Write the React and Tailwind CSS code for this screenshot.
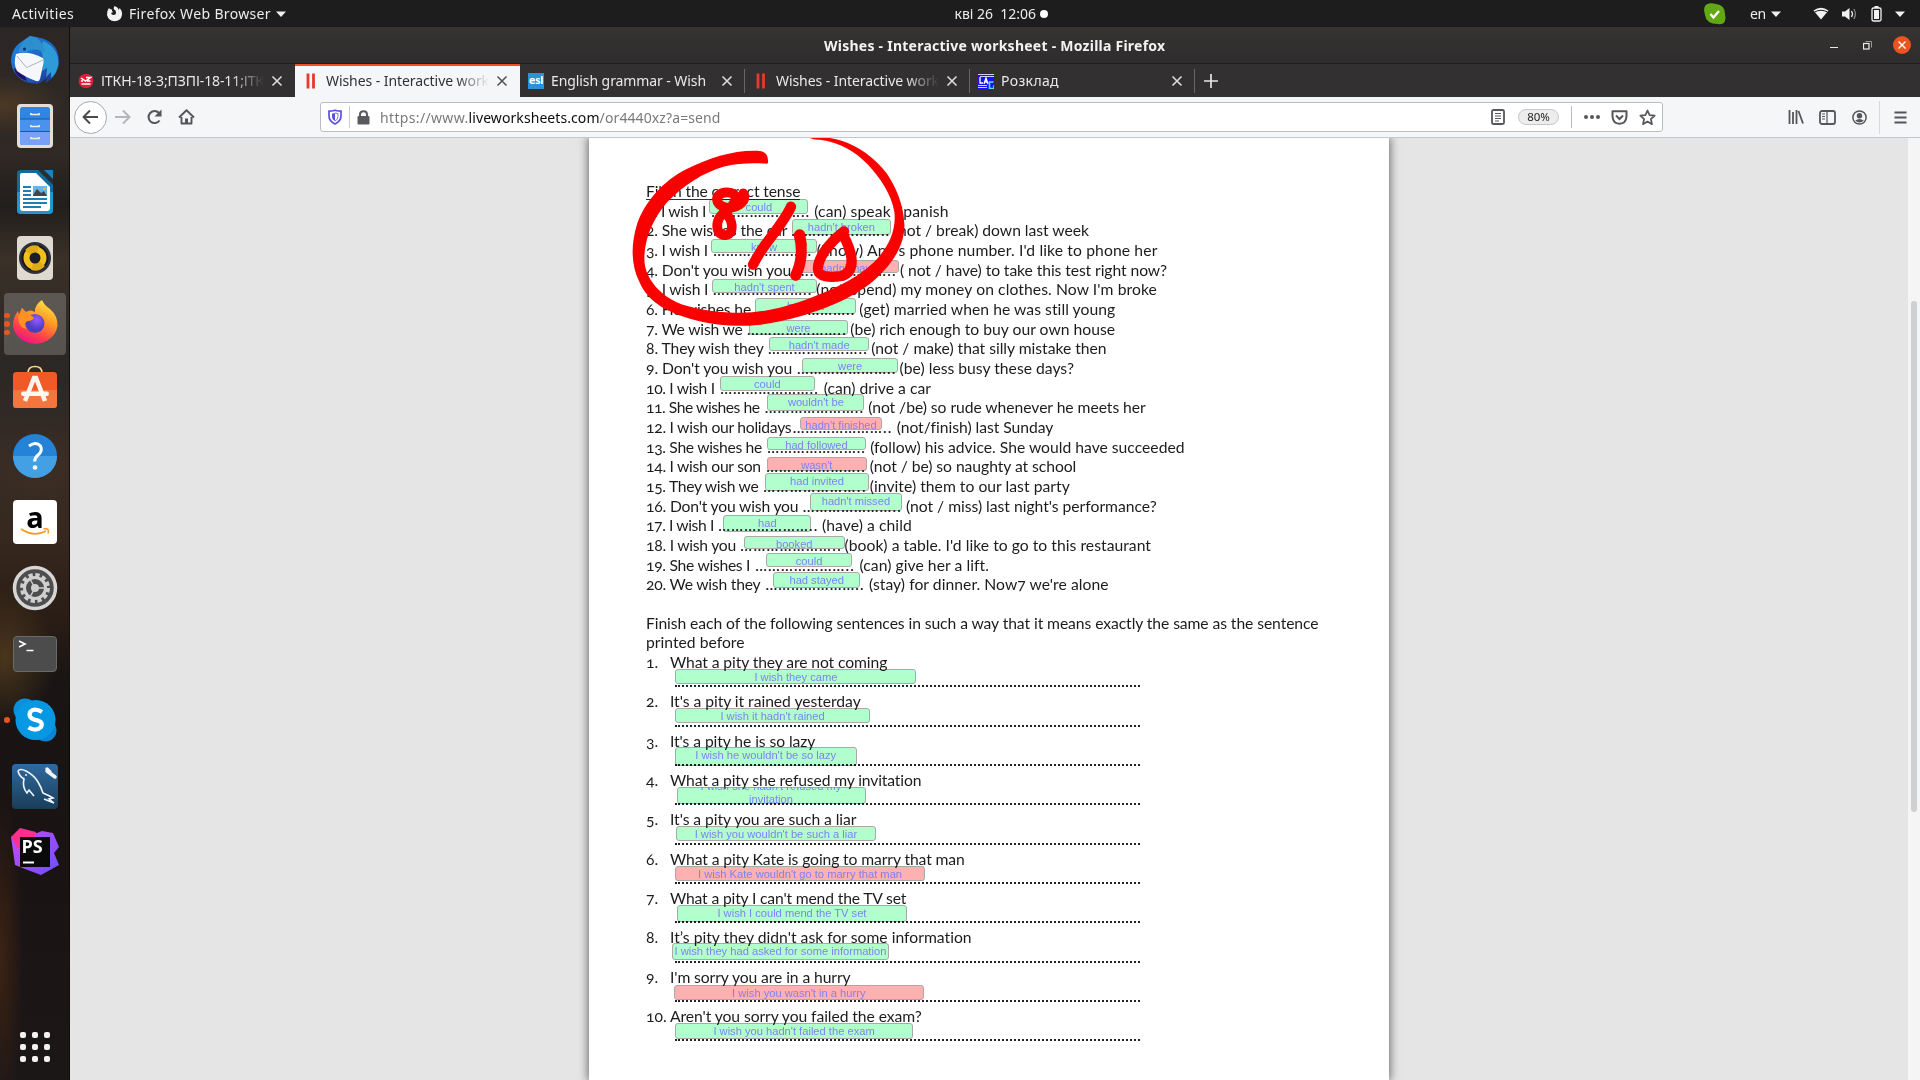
import { useLayoutEffect, useRef } from "react";

/* Text that is tracked so that it fills exactly w pixels. */
function Fit({ w, children, className = "" }) {
  const ref = useRef(null);
  useLayoutEffect(() => {
    const el = ref.current;
    el.style.letterSpacing = "0px";
    const n = el.textContent.length;
    const natural = el.getBoundingClientRect().width;
    el.style.letterSpacing = (w - natural) / n + "px";
  }, [w, children]);
  return (
    <span className={"block shrink-0 whitespace-pre " + className} style={{ width: w }}>
      <span ref={ref} className="inline-block whitespace-pre">{children}</span>
    </span>
  );
}

const LINES = [
  ["1. I wish I", 706, 711, 810, "(can) speak Spanish", 814.3, 948.5],
  ["2. She wishes the car", 787.3, 791, 890, "(not / break) down last week", 894, 1089],
  ["3. I wish I", 708, 713, 812, "(know) Ann's phone number. I'd like to phone her", 816.7, 1157.5],
  ["4. Don't you wish you", 791, 796.5, 896.5, "( not / have) to take this test right now?", 900, 1167],
  ["5. I wish I", 708.3, 712.7, 812.3, "(not/spend) my money on clothes. Now I'm broke", 816.3, 1157],
  ["6. He wishes he", 751, 755.7, 855.3, "(get) married when he was still young", 859.3, 1115.5],
  ["7. We wish we", 742.7, 746.7, 846.7, "(be) rich enough to buy our own house", 850.3, 1115],
  ["8. They wish they", 763.7, 767.8, 867.8, "(not / make) that silly mistake then", 871.3, 1106.5],
  ["9. Don't you wish you", 792.2, 796.7, 896.3, "(be) less busy these days?", 899.6, 1074],
  ["10. I wish I", 714.7, 720, 818.6, "(can) drive a car", 823.7, 931],
  ["11. She wishes he", 759.6, 764.5, 864, "(not /be) so rude whenever he meets her", 868.2, 1145.7],
  ["12. I wish our holidays", 791.4, 792.4, 892.2, "(not/finish) last Sunday", 896.7, 1053],
  ["13. She wishes he", 762, 767, 865.7, "(follow) his advice. She would have succeeded", 870.2, 1184.5],
  ["14. I wish our son", 760.8, 766, 865.7, "(not / be) so naughty at school", 869.8, 1076.3],
  ["15. They wish we", 758.4, 762.9, 867, "(invite) them to our last party", 869.8, 1069.8],
  ["16. Don't you wish you", 798.4, 802.4, 901.6, "(not / miss) last night's performance?", 906, 1156.7],
  ["17. I wish I", 713.9, 718, 818.4, "(have) a child", 822, 911.8],
  ["18. I wish you", 736, 740, 842, "(book) a table. I'd like to go to this restaurant", 844.5, 1151],
  ["19. She wishes I", 750.2, 755, 854.7, "(can) give her a lift.", 859.6, 988.6],
  ["20. We wish they", 760.4, 765.3, 864.5, "(stay) for dinner. Now7 we're alone", 869, 1108.6],
];

const QUESTIONS = [
  ["1.", "What a pity they are not coming", 887.2],
  ["2.", "It's a pity it rained yesterday", 860.7],
  ["3.", "It's a pity he is so lazy", 815.3],
  ["4.", "What a pity she refused my invitation", 921.6],
  ["5.", "It's a pity you are such a liar", 856.4],
  ["6.", "What a pity Kate is going to marry that man", 964.7],
  ["7.", "What a pity I can't mend the TV set", 906.2],
  ["8.", "It’s pity they didn't ask for some information", 971.9],
  ["9.", "I'm sorry you are in a hurry", 850.5],
  ["10.", "Aren't you sorry you failed the exam?", 921.6],
];

const G = true;
const R = false;
/* left, top, right, bottom, text, correct */
const ANSWERS = [
  [709.3, 198.5, 808.5, 213.7, "could", G],
  [792, 219.3, 890.7, 234.7, "hadn't broken", G],
  [711.3, 238.6, 816.7, 252.7, "know", G],
  [798.7, 260.3, 898.7, 272.7, "hadn't have", R],
  [712.3, 279.2, 816.7, 292.7, "hadn't spent", G],
  [755.3, 298.3, 855.7, 313.7, "had got", G],
  [749.3, 320.3, 847.7, 334.7, "were", G],
  [769, 337.3, 869.4, 350.7, "hadn't made", G],
  [802, 358.3, 898.4, 373.3, "were", G],
  [720, 376.3, 814.7, 391, "could", G],
  [767.3, 394.3, 864.5, 410.7, "wouldn't be", G],
  [800, 417.3, 882, 430.3, "hadn't finished", R],
  [767.3, 436.7, 865.7, 450, "had followed", G],
  [767, 456.5, 866.5, 470.7, "wasn't", R],
  [765.3, 473.4, 868.6, 490.7, "had invited", G],
  [810.2, 493.3, 901.6, 510.7, "hadn't missed", G],
  [723.3, 515.3, 811.4, 531.7, "had", G],
  [744, 536.3, 844.5, 549, "booked", G],
  [766, 553.3, 852.2, 567.3, "could", G],
  [773, 572.3, 860.4, 587.7, "had stayed", G],
  [675.3, 669.3, 916.5, 684.5, "I wish they came", G],
  [675.3, 708.3, 869.8, 722.7, "I wish it hadn't rained", G],
  [674.5, 747.3, 856.8, 765.7, "I wish he wouldn't be so lazy", G],
  [676.5, 786.7, 865.5, 804.5, "I wish she hadn't refused my invitation", G],
  [676, 826.3, 875.8, 840.7, "I wish you wouldn't be such a liar", G],
  [675.3, 866.4, 924.8, 880.7, "I wish Kate wouldn't go to marry that man", R],
  [677.3, 905.3, 906.6, 922, "I wish I could mend the TV set", G],
  [672, 943.4, 888.9, 960.4, "I wish they had asked for some information", G],
  [674, 985.4, 923.6, 1000, "I wish you wasn't in a hurry", R],
  [675.3, 1023.4, 912.8, 1038.7, "I wish you hadn't failed the exam", G],
];

function Answer({ a }) {
  const [l, t, r, b, text, ok] = a;
  const two = text.startsWith("I wish she");
  return (
    <div className="absolute" style={{ left: l - 589, top: t - 138, width: r - l, height: b - t }}>
      <div
        className={
          "absolute inset-0 rounded-[3px] border border-[#a9a9a9] mix-blend-multiply " +
          (ok ? "bg-[#b0ffcc]" : "bg-[#ffb0b0]")
        }
      />
      <div className="absolute inset-0 overflow-hidden text-center font-['Liberation_Sans',Arial,sans-serif] text-[11.15px] text-[#8080f4]">
        {two ? (
          <div className="-mt-[6.5px] leading-[12.8px]">
            I wish she hadn't refused my
            <br />
            invitation
          </div>
        ) : (
          <div className="whitespace-nowrap leading-[16px]">{text}</div>
        )}
      </div>
    </div>
  );
}

function Worksheet() {
  return (
    <div className="relative h-full w-[800px] bg-white pl-[57px] pt-[44px] text-[#1c1c1c] shadow-[0_0_9px_1px_rgba(0,0,0,0.55)] font-['Lato','Open_Sans',sans-serif] text-[15.7px] leading-[19.68px] oldstyle-nums">
      <div className="flex h-[19.68px]">
        <Fit w={154.3} className="h-[18px] border-b border-[#333]">Fill in the correct tense</Fit>
      </div>
      {LINES.map(([pre, pe, ds, de, post, ps, pend]) => (
        <div key={pre} className="flex h-[19.68px]">
          <Fit w={pe - 646}>{pre}</Fit>
          <div className="shrink-0" style={{ width: ds - pe }} />
          <Fit w={de - ds} className="font-['Open_Sans',sans-serif] text-[15px] font-semibold">…………………..</Fit>
          <div className="shrink-0" style={{ width: ps - de }} />
          <Fit w={pend - ps}>{post}</Fit>
        </div>
      ))}
      <div className="mt-[18.7px] h-[19.68px]">
        <Fit w={672.5}>Finish each of the following sentences in such a way that it means exactly the same as the sentence</Fit>
      </div>
      <div className="h-[19.68px]">
        <Fit w={98.5}>printed before</Fit>
      </div>
      {QUESTIONS.map(([n, q, end]) => (
        <div key={n} className="h-[39.34px]">
          <div className="flex h-[19.68px]">
            <div className="w-[24px] shrink-0 whitespace-nowrap">{n}</div>
            <Fit w={end - 670}>{q}</Fit>
          </div>
          <div className="ml-[29px] mt-[12.6px] w-[465px] border-t-2 border-dotted border-[#222]" />
        </div>
      ))}
      {ANSWERS.map((a, i) => (
        <Answer key={i} a={a} />
      ))}
      <svg className="absolute -left-[9px] -top-[8px] h-[220px] w-[400px]" viewBox="0 0 1200 660">
        <g fill="#fa0000">
          <path d="M564 99 Q567 66 540 63 C470 58 390 82 320 117 C250 152 195 215 172 280 C150 350 155 410 178 455 C205 520 270 548 330 566 C390 584 450 589 510 587 C570 583 600 574 650 562 C740 536 830 500 890 444 C950 390 976 330 973 280 C970 225 950 175 920 130 C885 85 840 50 780 31 Q765 26 750 24 L690 24 Q700 30 720 29 C780 36 830 68 862 102 C900 142 935 195 943 245 C950 300 925 355 880 398 C820 455 730 490 660 515 C590 538 530 551 460 548 C400 547 330 535 290 517 C230 488 198 440 194 400 C188 340 215 270 260 218 C310 165 370 128 430 110 C480 97 530 100 560 101 Z" />
        </g>
        <g fill="none" stroke="#fa0000" strokeLinecap="round" strokeLinejoin="round">
          <path strokeWidth="29" d="M490 190 C502 212 476 232 450 233 C418 234 404 212 414 198 C426 184 458 182 466 200 C470 222 446 240 430 250 C410 266 408 290 416 306 C428 320 448 318 454 302 C460 278 446 256 432 244" />
          <path strokeWidth="34" d="M462 222 L490 200" />
          <path strokeWidth="31" d="M633 230 C620 260 590 300 555 345 Q530 382 519 404" />
          <path strokeWidth="33" d="M658 316 Q674 380 647 436 M659 314 L664 345" />
          <path strokeWidth="31" d="M792 304 C750 336 712 384 714 418 C716 442 750 443 785 438 C828 424 820 372 790 316" />
        </g>
      </svg>
    </div>
  );
}

function Slot({ children, active, dots = 0 }) {
  return (
    <div className="flex h-[66px] w-[70px] shrink-0 items-center justify-center">
      <div className={"relative flex h-[62px] w-[62px] items-center justify-center rounded " + (active ? "bg-white/20" : "")}>
        {dots > 0 && (
          <div className="absolute left-0 flex h-full flex-col items-center justify-center gap-[3px]">
            {Array.from({ length: dots }, (_, i) => (
              <i key={i} className="block h-[5.5px] w-[5.5px] rounded-full bg-[#e95420]" />
            ))}
          </div>
        )}
        <svg width="50" height="50" viewBox="0 0 50 50">{children}</svg>
      </div>
    </div>
  );
}

function Dock() {
  return (
    <div className="flex w-[70px] shrink-0 flex-col border-r border-black/60 bg-[radial-gradient(ellipse_60px_30px_at_5px_78px,#4b3926,transparent),radial-gradient(ellipse_60px_40px_at_40px_440px,#3d2e24,transparent),radial-gradient(ellipse_50px_70px_at_5px_630px,#4a361c,transparent),radial-gradient(ellipse_24px_160px_at_0px_930px,#3c2314,transparent),linear-gradient(#2b2725,#302924_12%,#221e1c_17%,#3a3128_22%,#2b2724_32%,#362b25_40%,#37291f_48%,#2a1d16_56%,#191514_62%,#1a1313_80%,#1c1717)]">
      <Slot>
        <defs>
          <linearGradient id="tb" x1="0" y1="0" x2="1" y2="1"><stop offset="0" stopColor="#1f86dd" /><stop offset=".6" stopColor="#1f5fc0" /><stop offset="1" stopColor="#1a2a80" /></linearGradient>
        </defs>
        <path d="M20 1C26 2 34 3 40 7C48 13 50 22 48.500 31C46 41 40 46 35 48L37 43L30 48Q22 50 12 45Q2 38 1 27Q1 12 14 5Z" fill="url(#tb)" />
        <path d="M33 6C43 10 49 18 48.500 29C47 37 44 41 41 43L41 37L36 42L37 33L32 36Q35 24 31 16Z" fill="#2d9bd6" />
        <path d="M4 33Q5 42 17 46L14 39Z" fill="#24106b" />
        <path d="M6 19Q18 15 33 23Q34 25 33.500 28L30 44Q29 47 26 46Q15 42 7 36Q3 28 6 19Z" fill="#f5f7fb" />
        <path d="M7 21L16 32Q17 33 19 31.500L33 25" stroke="#aeb5be" fill="none" />
        <path d="M8 17Q11 6 20 1L26 2.500Q34 8 35 18Q24 11 15 18Z" fill="#2e8fce" />
        <circle cx="14.500" cy="14" r="1.500" fill="#152b66" />
      </Slot>
      <Slot>
        <rect x="7" y="3" width="36" height="44" rx="4" fill="#e4ded5" />
        <rect x="10" y="6" width="30" height="38" rx="2.5" fill="#2f86e2" />
        <rect x="10" y="18" width="30" height="12" fill="#4a92ee" />
        <path d="M10 31H40V41.500Q40 44 37.500 44H12.500Q10 44 10 41.500Z" fill="#78a0f6" />
        <path d="M10 18H40M10 30.500H40" stroke="#1d559f" />
        <path d="M21 12V13.500H29V12M21 24V25.500H29V24M21 36V37.500H29V36" stroke="#f1eee6" strokeWidth="1.700" fill="none" />
      </Slot>
      <Slot>
        <path d="M11 3H43V43Q43 47 39 47H11Q7 47 7 43V7Q7 3 11 3Z" fill="#146a9b" />
        <path d="M7 25H43V43Q43 47 39 47H11Q7 47 7 43Z" fill="#2494cc" />
        <path d="M12 6H26L40 20V41Q40 44 37 44H13Q10 44 10 41V8Q10 6 12 6Z" fill="#fff" />
        <path d="M28 3L43 18V3Z" fill="#23303a" />
        <path d="M34 3H43V12Z" fill="#1a84ba" />
        <path d="M13 20H21M13 24H21M13 28H21M13 32H37M13 36H37M13 40H31" stroke="#1d7fb5" strokeWidth="2" />
        <rect x="23" y="19" width="14" height="10" fill="#66b5e5" />
        <path d="M23 28L27 22L31 26L34 24L37 29H23Z" fill="#445" />
        <circle cx="34.500" cy="21.500" r="1.500" fill="#f8b62d" />
      </Slot>
      <Slot>
        <rect x="7" y="3" width="36" height="44" rx="4" fill="#dfdad0" />
        <circle cx="25" cy="25" r="16" fill="#2f323d" />
        <circle cx="25" cy="25" r="12.500" fill="#f2bf20" stroke="#171922" strokeWidth="2" />
        <path d="M25 25L15 17A13 13 0 0 1 29 13Z M25 25L35 33A13 13 0 0 1 21 37Z" fill="#e0ab18" />
        <circle cx="25" cy="25" r="5.500" fill="#1d1f26" />
      </Slot>
      <Slot active dots={3}>
        <defs>
          <linearGradient id="ff" x1=".8" y1="0" x2=".3" y2="1"><stop offset="0" stopColor="#ffe94a" /><stop offset=".4" stopColor="#ff9a22" /><stop offset=".75" stopColor="#ff3d4c" /><stop offset="1" stopColor="#e8128a" /></linearGradient>
          <radialGradient id="fp" cx=".6" cy=".3"><stop offset="0" stopColor="#9a59ff" /><stop offset="1" stopColor="#4a3fc4" /></radialGradient>
        </defs>
        <path d="M32 1Q34 6 40 10Q48 17 47.500 27A22.500 21 0 0 1 3 27Q3 18 8 12L9 16Q11 11 12 9L16 13Q20 10 25 13L25 10Q27 4 32 1Z" fill="url(#ff)" />
        <circle cx="25" cy="24.500" r="9.500" fill="url(#fp)" />
        <path d="M8 18L12 9L16 15Q21 15 24 19Q22 22 18 22Q12 24 17 30Q9 30 8 18Z" fill="#ff8f27" />
      </Slot>
      <Slot>
        <path d="M18 9V8Q18 1.500 25 1.500T32 8V9" stroke="#f0d49c" strokeWidth="1.700" fill="none" />
        <rect x="3" y="7" width="44" height="36" rx="3.500" fill="#ef5a26" />
        <path d="M3 25H47V39.500Q47 43 43.500 43H6.500Q3 43 3 39.500Z" fill="#f3763f" />
        <path d="M15 36L24 13H26L35 36" stroke="#fff4ed" strokeWidth="4.500" fill="none" />
        <rect x="11" y="26.500" width="28" height="4.500" rx="2.200" fill="#fff7f1" />
      </Slot>
      <Slot>
        <circle cx="25" cy="25" r="22" fill="#2482d7" />
        <path d="M3 25H47A22 22 0 0 1 3 25Z" fill="#44a0e4" />
        <path d="M19 15Q26 10 30.500 15Q33 20 28 24Q24.500 27 24.800 30.500" stroke="#fff" strokeWidth="3" fill="none" />
        <circle cx="25" cy="36.500" r="2.300" fill="#fff" />
      </Slot>
      <Slot>
        <rect x="3" y="3" width="44" height="44" rx="4" fill="#fff" />
        <text x="25" y="31" textAnchor="middle" fontSize="29" fontWeight="700" fontFamily="Open Sans, sans-serif" fill="#000">a</text>
        <path d="M11 32Q24 40.500 36 34" stroke="#f39c1f" strokeWidth="1.800" fill="none" />
        <path d="M33.500 32Q40 30.500 38 36.500" stroke="#f39c1f" strokeWidth="1.500" fill="none" />
      </Slot>
      <Slot>
        <circle cx="25" cy="25" r="20.500" fill="#4d4d4d" stroke="#d6d6d6" strokeWidth="3.500" />
        <circle cx="25" cy="25" r="13" fill="none" stroke="#cfcfcf" strokeWidth="4" strokeDasharray="4.200 2.600" />
        <circle cx="25" cy="25" r="10.500" fill="none" stroke="#cfcfcf" strokeWidth="3" />
        <circle cx="25" cy="25" r="4" fill="#cfcfcf" />
        <path d="M25 25L35 25M25 25L20 34M25 25L20 16" stroke="#cfcfcf" strokeWidth="1.500" />
      </Slot>
      <Slot>
        <rect x="3.500" y="7.500" width="43" height="35" rx="3.500" fill="#4c4c4c" stroke="#6a6a6a" />
        <path d="M9 12L15 15L9 18" stroke="#fff" strokeWidth="1.700" fill="none" />
        <path d="M16.500 21.500H23.500" stroke="#fff" strokeWidth="1.500" />
      </Slot>
      <Slot dots={1}>
        <circle cx="15" cy="15" r="11.500" fill="#0b8fdc" />
        <circle cx="35.500" cy="35.500" r="11" fill="#0a84d6" />
        <circle cx="25.500" cy="25" r="20" fill="#0798e4" />
        <path d="M32 17Q25 12.500 20.500 16.500Q17.500 23 25 24.800Q34 26.500 31 32Q26 37 18.500 32.500" stroke="#fff" strokeWidth="4.300" fill="none" />
      </Slot>
      <Slot>
        <defs><linearGradient id="my" x1="0" y1="0" x2="0" y2="1"><stop offset="0" stopColor="#2f6aa0" /><stop offset="1" stopColor="#1a3d58" /></linearGradient></defs>
        <rect x="2" y="3" width="46" height="45" rx="4" fill="url(#my)" />
        <path d="M8 10Q10 7 16 10Q24 14 28 21Q31 26 33 32Q38 34 43 37L39 38L44 42L34 38M8 10Q9 15 14 18Q12 26 17 32L19 29L24 35" stroke="#eef4fa" strokeWidth="1.600" fill="none" />
        <path d="M37 8L40 11M37 10L45 16" stroke="#eef4fa" strokeWidth="3.500" strokeLinecap="round" />
        <circle cx="16" cy="14" r=".9" fill="#fff" />
      </Slot>
      <Slot>
        <defs><linearGradient id="ps" x1="0" y1="0" x2="1" y2="1"><stop offset="0" stopColor="#c54bf0" /><stop offset="1" stopColor="#6c50ff" /></linearGradient></defs>
        <path d="M1 10L27 6L32 4L43 6L49 20L44 26L49 38L31 48L15 42L5 38Z" fill="url(#ps)" />
        <path d="M1 10L10 1L26 5L24 13L8 22Z" fill="#ff2f8e" />
        <rect x="10" y="10" width="30" height="30" fill="#0a0a0a" />
        <text x="11.500" y="26" fontSize="18" fontWeight="700" fontFamily="Open Sans, sans-serif" fill="#fff">PS</text>
        <path d="M13 35.500H24" stroke="#fff" strokeWidth="2" />
      </Slot>
      <div className="mx-auto mb-[18px] mt-auto grid grid-cols-3 gap-[6px]">
        {Array.from({ length: 9 }, (_, i) => (
          <i key={i} className="block h-[6px] w-[6px] rounded-[2px] bg-[#f2f2f0]" />
        ))}
      </div>
    </div>
  );
}

function Cross({ className = "text-[#dcdcdc]" }) {
  return (
    <svg width="12" height="12" viewBox="0 0 12 12" className={className}>
      <path d="M1.500 1.500L10.500 10.500M10.500 1.500L1.500 10.500" stroke="currentColor" strokeWidth="1.600" />
    </svg>
  );
}

const Bars = () => (
  <svg width="16" height="16" viewBox="0 0 16 16"><path d="M5 .5V15.500M10.500 .5V15.500" stroke="#e63a2e" strokeWidth="2.800" /></svg>
);

function Tab({ icon, text, w, active, fade, sep, pad, shift }) {
  return (
    <div className={"flex h-[33px] w-[225px] shrink-0 items-center " + (active ? "border-t-2 border-[#e95420] bg-[#f5f6f8] pb-[2px] text-[#303038]" : "text-[#e9e9e9]")}>
      <div className={"flex shrink-0 items-center gap-[7px] " + pad}>
        {icon}
        <div className={fade ? "[mask-image:linear-gradient(90deg,#000_80%,transparent)]" : ""}>
          <Fit w={w}>{text}</Fit>
        </div>
      </div>
      <div className={"ml-auto flex items-center " + (shift ? "mr-[12px]" : "mr-[11px]")}><Cross className={active ? "text-[#555]" : "text-[#dcdcdc]"} /></div>
      {sep && <div className="h-[24px] w-px bg-[#68666a]" />}
    </div>
  );
}

function Caret() {
  return <svg width="10" height="6" viewBox="0 0 10 6"><path d="M0 0.500H10L5 6Z" fill="#f0f0f0" /></svg>;
}

function At({ x, w = 20, children, className = "" }) {
  return (
    <div className={"absolute top-0 flex h-full items-center justify-center " + className} style={{ left: x - w / 2, width: w }}>
      {children}
    </div>
  );
}

function TopBar() {
  return (
    <div className="relative flex h-[27px] shrink-0 items-center bg-[#1d1d1d] pl-[12px] text-[14px] text-[#ececec]">
      <Fit w={62}>Activities</Fit>
      <svg className="ml-[32px]" width="17" height="17" viewBox="0 0 17 17">
        <path d="M8.500 1Q7 3 8 4.500Q10 5 10 7.500Q10 10 7.500 10Q5.500 10 5 8Q6 8 7 7Q5.500 6 6 4.500Q4 4.500 3 3Q0.500 6 1 10Q2.500 16 8.500 16.200Q15 16 16 10Q16.500 6 13.500 3L13 5Q12 2 8.500 1Z" fill="#f2f2f2" />
      </svg>
      <Fit w={142} className="ml-[6px]">Firefox Web Browser</Fit>
      <div className="ml-[5px]"><Caret /></div>
      <Fit w={81.5} className="absolute left-[954.5px]">кві 26  12:06</Fit>
      <div className="absolute left-[1040px] h-[8px] w-[8px] rounded-full bg-white" />
      <At x={1715} w={24}>
        <svg width="24" height="24" viewBox="0 0 24 24">
          <path d="M1 8Q1 2 7 1.200Q10 1 13 2Q22 3 22 12Q23 16 22 19Q20 23 15 22Q3 22 2 13Z" fill="#62a815" />
          <path d="M7.500 12L10.500 15.500L16 9" stroke="#fff" strokeWidth="2.400" fill="none" />
        </svg>
      </At>
      <Fit w={16} className="absolute left-[1750px]">en</Fit>
      <At x={1776}><Caret /></At>
      <At x={1821}><svg width="16" height="13" viewBox="0 0 16 13"><path d="M.5 3.500Q8-2 15.500 3.500L8 12.500Z" fill="#f2f2f2" /><path d="M1.500 5Q8 1.500 14.500 5" stroke="#1d1d1d" strokeWidth="1" fill="none" /></svg></At>
      <At x={1849}><svg width="15" height="14" viewBox="0 0 15 14"><path d="M0 4.500H3L7.500 1V13L3 9.500H0Z" fill="#f2f2f2" /><path d="M9.500 4Q11.500 7 9.500 10" stroke="#eee" strokeWidth="1.300" fill="none" /><path d="M11.800 2Q15 7 11.800 12" stroke="#888" strokeWidth="1.300" fill="none" /></svg></At>
      <At x={1876.5}><svg width="11" height="16" viewBox="0 0 11 16"><path d="M3.500 0H7.500V2H3.500Z" fill="#f2f2f2" /><rect x="1" y="2" width="9" height="13" rx="1.500" fill="none" stroke="#f2f2f2" strokeWidth="1.300" /><rect x="3" y="4" width="5" height="9" fill="#f2f2f2" /></svg></At>
      <At x={1900}><Caret /></At>
    </div>
  );
}

function Chrome() {
  return (
    <>
      <div className="relative flex h-[37px] shrink-0 items-center border-b border-[#1e1c1d] bg-gradient-to-b from-[#353431] to-[#2e2c2e] text-[14px] font-bold text-[#f3f3f3]">
        <Fit w={341.4} className="ml-[754px]">Wishes - Interactive worksheet - Mozilla Firefox</Fit>
        <At x={1764}><div className="mt-[4px] h-px w-[8px] bg-[#e8e8e8]" /></At>
        <At x={1797}><svg width="9" height="9" viewBox="0 0 9 9"><rect x=".5" y="2.500" width="5.500" height="5.500" fill="none" stroke="#eee" strokeWidth="1.200" /><path d="M2.500 .5H8.500V6.500" stroke="#999" fill="none" /></svg></At>
        <At x={1832}><div className="flex h-[18px] w-[18px] items-center justify-center rounded-full bg-[#e95420]"><svg width="8" height="8" viewBox="0 0 8 8"><path d="M.5 .5L7.500 7.500M7.500 .5L.5 7.500" stroke="#fff" strokeWidth="1.400" /></svg></div></At>
      </div>
      <div className="flex h-[33px] shrink-0 items-center bg-[#323031] text-[14px]">
        <Tab
          pad="ml-[8px]"
          shift
          icon={<svg width="16" height="16" viewBox="0 0 16 16"><circle cx="8" cy="8" r="7.300" fill="#e21d39" /><path d="M3 5L7.500 8L12.500 4.500H8M3 8H5M12.500 8H9M3.500 11H12.500" stroke="#fff" strokeWidth="1.500" fill="none" /></svg>}
          text="ІТКН-18-3;ПЗПІ-18-11;ІТК"
          w={163}
          fade
        />
        <Tab pad="ml-[8px]" shift active icon={<Bars />} text="Wishes - Interactive work" w={163} fade />
        <Tab pad="ml-[8px]" sep icon={<div className="flex h-[16px] w-[16px] items-center justify-center bg-[#2a93d8] text-[11px] font-bold tracking-[-0.5px] text-white">esl</div>} text="English grammar - Wish" w={155} />
        <Tab pad="ml-[8px]" sep icon={<Bars />} text="Wishes - Interactive work" w={163} fade />
        <Tab
          pad="ml-[8px]"
          sep
          icon={<svg width="16" height="16" viewBox="0 0 16 16"><rect width="16" height="16" fill="#1414f0" /><path d="M0 1.500H16M0 12.500H9M0 14.500H9M2 3.500H16" stroke="#fff" strokeWidth=".8" /><path d="M2 4V10H5M6 11L8 5L10 11M6.500 9H9.500" stroke="#fff" strokeWidth="1.300" fill="none" /><path d="M15.500 9H11.500V15.500H16V12" stroke="#54e4f4" strokeWidth="1.500" fill="none" /></svg>}
          text="Розклад"
          w={58}
        />
        <svg className="ml-[8px]" width="16" height="16" viewBox="0 0 16 16"><path d="M8 1V15M1 8H15" stroke="#e6e6e6" strokeWidth="1.700" /></svg>
      </div>
      <div className="relative flex h-[41px] shrink-0 items-center border-b border-[#c3c7cf] bg-[#f5f6f8] text-[#55555a]">
        <At x={20} w={34}>
          <div className="flex h-[33px] w-[33px] items-center justify-center rounded-full border border-[#a9a9ad] bg-white">
            <svg width="17" height="16" viewBox="0 0 17 16"><path d="M8 1.500L1.500 8L8 14.500M2 8H16" stroke="#4a4a4e" strokeWidth="2" fill="none" strokeLinejoin="round" /></svg>
          </div>
        </At>
        <At x={52.5}><svg width="17" height="16" viewBox="0 0 17 16"><path d="M9 1.500L15.500 8L9 14.500M15 8H1" stroke="#b5b6b9" strokeWidth="2" fill="none" /></svg></At>
        <At x={84.5}><svg width="17" height="16" viewBox="0 0 17 16"><path d="M13.500 11.500A6 6 0 1 1 13 4" stroke="currentColor" strokeWidth="2.100" fill="none" /><path d="M15.500 .5V7.500H8.500Z" fill="currentColor" /></svg></At>
        <At x={116.5}><svg width="17" height="16" viewBox="0 0 17 16"><path d="M1 8.500L8.500 1.200L16 8.500M3.500 8V14.500H13.500V8" stroke="currentColor" strokeWidth="1.900" fill="none" strokeLinejoin="round" /><path d="M7 14.500V9.500H10V14.500Z" fill="currentColor" /></svg></At>
        <div className="ml-[250px] flex h-[30px] w-[1343px] items-center rounded-[3px] border border-[#b9bdc6] bg-white pl-[7px] text-[14px] text-[#7a7a7e]">
          <svg width="14" height="16" viewBox="0 0 14 16"><path d="M7 1.200Q10 2.200 13 2.200V7Q13 12 7 15Q1 12 1 7V2.200Q4 2.200 7 1.200Z" fill="#fff" stroke="#5b50e0" strokeWidth="1.700" /><path d="M7 4Q5 4.500 4 4.500V7.500Q4 10.500 7 12Z" fill="#5b50e0" /><path d="M7 4Q9 4.500 10 4.500V7.500Q10 10.500 7 12" fill="none" stroke="#5b50e0" strokeWidth=".8" /></svg>
          <div className="ml-[7px] h-[22px] w-px bg-[#c9ccd2]" />
          <svg className="ml-[7px]" width="13" height="15" viewBox="0 0 13 15"><path d="M3 7V4.500Q3 1.200 6.500 1.200T10 4.500V7" stroke="#5a5a5e" strokeWidth="2" fill="none" /><rect x=".5" y="6" width="12" height="8.500" rx="1.300" fill="#5a5a5e" /></svg>
          <div className="ml-[10px] flex">
            <Fit w={88.6}>https://www.</Fit>
            <Fit w={131} className="text-[#0c0c0d]">liveworksheets.com</Fit>
            <Fit w={121}>/or4440xz?a=send</Fit>
          </div>
        </div>
        <At x={1428}><svg width="14" height="16" viewBox="0 0 14 16"><rect x="1" y="1" width="12" height="14" rx="1.500" fill="none" stroke="currentColor" strokeWidth="1.800" /><path d="M4 4.500H10M4 7H10M4 9.500H10M4 12H8" stroke="currentColor" strokeWidth="1" /></svg></At>
        <At x={1468.5} w={41}><div className="flex h-[16px] w-[41px] items-center justify-center rounded-full border border-[#c8c8cb] bg-[#ededee] text-[11.5px] leading-none text-[#1c1c1e]">80%</div></At>
        <At x={1501.500} w={1}><div className="h-[22px] w-px bg-[#b9bdc6]" /></At>
        <At x={1522}><svg width="18" height="6" viewBox="0 0 18 6"><circle cx="3" cy="3" r="2" fill="currentColor" /><circle cx="9" cy="3" r="2" fill="currentColor" /><circle cx="15" cy="3" r="2" fill="currentColor" /></svg></At>
        <At x={1549.5}><svg width="17" height="15" viewBox="0 0 17 15"><path d="M1.500 1.200H15.500V6.500Q15 13.500 8.500 13.800Q2 13.500 1.500 6.500Z" fill="none" stroke="currentColor" strokeWidth="2" strokeLinejoin="round" /><path d="M5 5.500L8.500 9L12 5.500" stroke="currentColor" strokeWidth="2" fill="none" /></svg></At>
        <At x={1577.5}><svg width="17" height="17" viewBox="0 0 17 17"><path d="M8.500 1.500L10.600 6.200L15.700 6.700L11.900 10.100L13 15.200L8.500 12.500L4 15.200L5.100 10.100L1.300 6.700L6.400 6.200Z" fill="none" stroke="currentColor" strokeWidth="1.700" strokeLinejoin="round" /></svg></At>
        <At x={1726}><svg width="16" height="14" viewBox="0 0 16 14"><path d="M1.500 0V14M5 2V14M8.500 0V14M10.500 1L15 13.500" stroke="currentColor" strokeWidth="1.800" /></svg></At>
        <At x={1757.5}><svg width="17" height="15" viewBox="0 0 17 15"><rect x="1" y="1" width="15" height="13" rx="2" fill="none" stroke="currentColor" strokeWidth="1.800" /><path d="M8 1V14M3 4H6M3 6.500H6M3 9H6" stroke="currentColor" strokeWidth="1.200" /></svg></At>
        <At x={1789.5}><svg width="15" height="15" viewBox="0 0 15 15"><circle cx="7.500" cy="7.500" r="6.600" fill="none" stroke="currentColor" strokeWidth="1.500" /><circle cx="7.500" cy="5.700" r="2.700" fill="currentColor" /><path d="M3.200 10.500Q7.500 7.500 11.800 10.500Q7.500 14.500 3.200 10.500Z" fill="currentColor" /></svg></At>
        <At x={1809.500} w={1}><div className="h-[33px] w-px bg-[#d6d8dc]" /></At>
        <At x={1830.5}><svg width="13" height="13" viewBox="0 0 13 13"><path d="M.5 1.500H12.500M.5 6.500H12.500M.5 11.500H12.500" stroke="currentColor" strokeWidth="2" /></svg></At>
      </div>
    </>
  );
}

export default function App() {
  return (
    <div className="flex h-[1080px] w-[1920px] flex-col overflow-hidden bg-[#1d1d1d] font-['Noto_Sans','Open_Sans',sans-serif]">
      <TopBar />
      <div className="flex min-h-0 flex-1">
        <Dock />
        <div className="flex min-w-0 flex-1 flex-col">
          <Chrome />
          <div className="flex min-h-0 flex-1 overflow-hidden bg-[#e5e5e5]">
            <div className="ml-[519px] h-full"><Worksheet /></div>
            <div className="ml-auto w-[12px] bg-[#f5f5f5] pl-[3px] pt-[163px]">
              <div className="h-[511px] w-[6px] rounded-full bg-[#ced0d1]" />
            </div>
          </div>
        </div>
      </div>
    </div>
  );
}
